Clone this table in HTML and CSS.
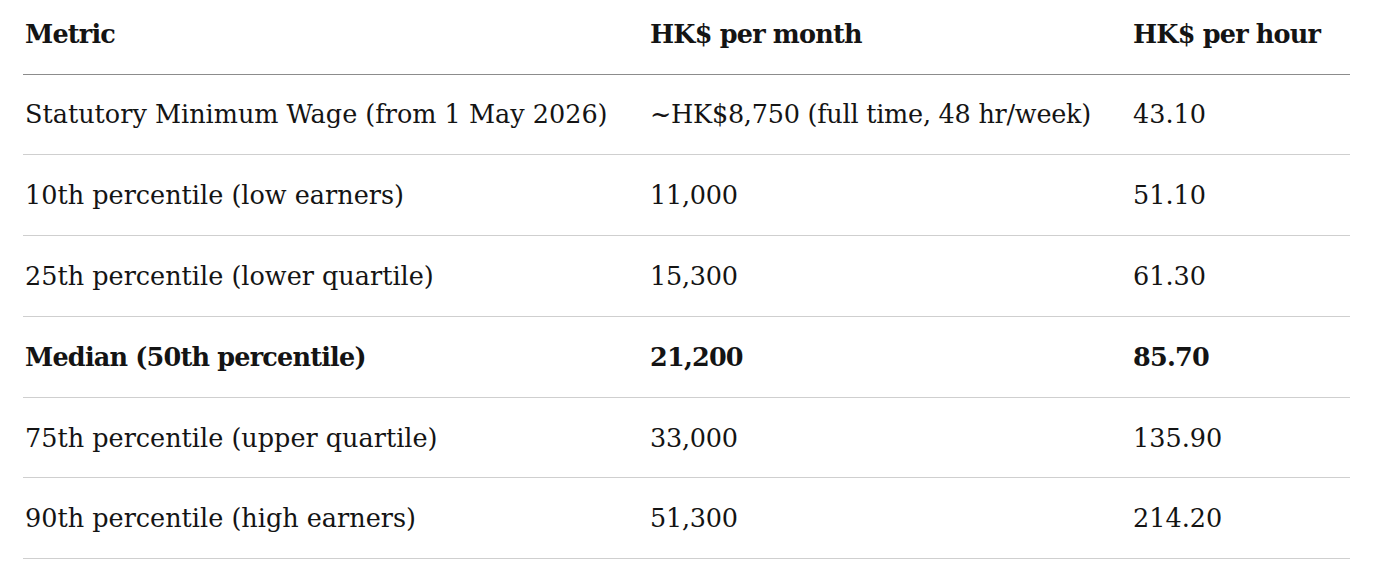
FILE: index.html
```html
<!DOCTYPE html>
<html>
<head>
<meta charset="utf-8">
<link rel="stylesheet" href="styles.css">
</head>
<body>
<table class="wages">
  <colgroup><col class="c1"><col class="c2"><col class="c3"></colgroup>
  <thead>
    <tr><th>Metric</th><th>HK$ per month</th><th>HK$ per hour</th></tr>
  </thead>
  <tbody>
    <tr><td>Statutory Minimum Wage (from 1 May 2026)</td><td>~HK$8,750 (full time, 48 hr/week)</td><td>43.10</td></tr>
    <tr><td>10th percentile (low earners)</td><td>11,000</td><td>51.10</td></tr>
    <tr><td>25th percentile (lower quartile)</td><td>15,300</td><td>61.30</td></tr>
    <tr class="strong"><td>Median (50th percentile)</td><td>21,200</td><td>85.70</td></tr>
    <tr><td>75th percentile (upper quartile)</td><td>33,000</td><td>135.90</td></tr>
    <tr><td>90th percentile (high earners)</td><td>51,300</td><td>214.20</td></tr>
  </tbody>
</table>
</body>
</html>
```

FILE: styles.css
```css
html, body { margin: 0; padding: 0; background: #fff; }
body { padding: 0 30px 0 23px; font-family: "DejaVu Serif", "Liberation Serif", serif; color: #141414; }
.wages { width: 1327px; border-collapse: collapse; table-layout: fixed; font-size: 25.5px; }
.c1 { width: 625px; }
.c2 { width: 483px; }
.c3 { width: 219px; }
.wages th, .wages td { text-align: left; padding: 0 0 0 2px; vertical-align: middle; white-space: nowrap; }
.wages thead th { height: 74px; box-sizing: border-box; font-weight: 700; letter-spacing: -0.8px; padding-bottom: 6px; border-bottom: 1px solid #8c8c8c; }
.wages tbody td { height: 80.8px; box-sizing: border-box; border-bottom: 1px solid #cfcfcf; }
.wages tbody td:nth-child(2) { letter-spacing: -0.25px; }
.wages tr.strong td { font-weight: 700; letter-spacing: -0.8px; }
```
